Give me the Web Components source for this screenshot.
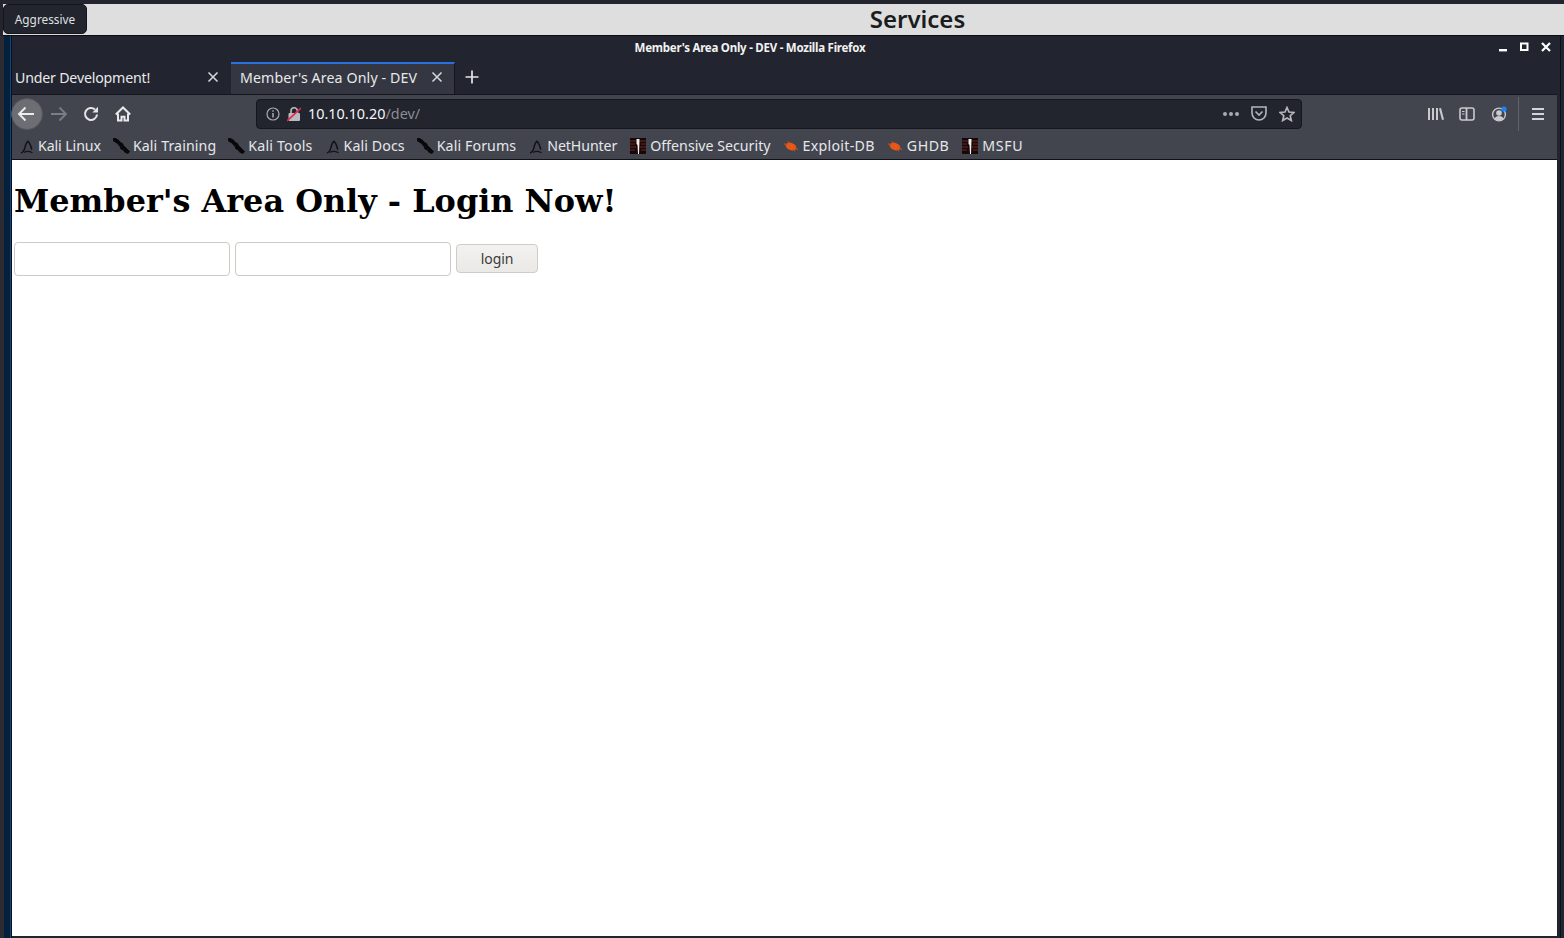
<!DOCTYPE html>
<html>
<head>
<meta charset="utf-8">
<title>Services</title>
<style>
  html, body { margin: 0; height: 100%; background: #23252e; overflow: hidden; }
</style>
</head>
<body>
<services-page>
  <services-header title-text="Services" slot="header"></services-header>
  <ff-window slot="window" window-title="Member's Area Only - DEV - Mozilla Firefox">
    <ff-tab slot="tabs" style="letter-spacing:-.2px">Under Development!</ff-tab>
    <ff-tab slot="tabs" active style="letter-spacing:.12px">Member's Area Only - DEV</ff-tab>
    <ff-bookmark slot="bookmarks" icon="dragon" style="letter-spacing:-.1px;margin-right:1px">Kali Linux</ff-bookmark>
    <ff-bookmark slot="bookmarks" icon="knife" style="letter-spacing:.1px;margin-right:1px">Kali Training</ff-bookmark>
    <ff-bookmark slot="bookmarks" icon="knife" style="letter-spacing:.2px;margin-right:2px">Kali Tools</ff-bookmark>
    <ff-bookmark slot="bookmarks" icon="dragon" style="letter-spacing:.1px;margin-right:1px">Kali Docs</ff-bookmark>
    <ff-bookmark slot="bookmarks" icon="knife" style="letter-spacing:.1px;margin-right:2px">Kali Forums</ff-bookmark>
    <ff-bookmark slot="bookmarks" icon="dragon" style="letter-spacing:-.1px;margin-right:2px">NetHunter</ff-bookmark>
    <ff-bookmark slot="bookmarks" icon="offsec" style="margin-right:1px">Offensive Security</ff-bookmark>
    <ff-bookmark slot="bookmarks" icon="bug" style="letter-spacing:.3px;margin-right:1px">Exploit-DB</ff-bookmark>
    <ff-bookmark slot="bookmarks" icon="bug" style="letter-spacing:.5px;margin-right:2px">GHDB</ff-bookmark>
    <ff-bookmark slot="bookmarks" icon="offsec" style="letter-spacing:.7px">MSFU</ff-bookmark>
    <login-page slot="content"></login-page>
  </ff-window>
</services-page>

<script>
const UI_FONT = `"Noto Sans", "Open Sans", sans-serif`;

const bookmarkIcons = {
  dragon: `<svg width="15" height="16" viewBox="0 0 15 16" fill="none" stroke="#121317" stroke-width="1.500">
      <path d="M1 15c2.300-.8 3.400-2.800 4-5.600C5.500 7 6.300 4.400 8.100 3.200c1.500 1.600 2.900 4.500 3.600 8.500"/>
      <path d="M4 14.500c2.200-1.400 5-1.500 8.500.2" stroke-width="1.200"/>
    </svg>`,
  knife: `<svg width="17" height="16" viewBox="0 0 17 16">
      <path d="M0 .5l3 .2 2.500 1.500 2 2.300 2 1 1 2 2.500 2.500 3.500 3.500-1.500 2-3.500-1.500-1-2-2.500-1-1-2.500L4 5 .5 3z" fill="#08080a" stroke="#08080a" stroke-width=".9"/>
    </svg>`,
  offsec: `<svg width="16" height="16" viewBox="0 0 16 16">
      <rect width="16" height="16" fill="#17090a"/>
      <path d="M0 3h6M0 6h5M0 9h6M0 12h5M10 3h6M11 6h5M10 9h6M11 12h5" stroke="#6b2a22" stroke-width="1"/>
      <path d="M6.500 1h3v2l-.5 13H8L7.500 7l-1-1z" fill="#f3eeea"/>
    </svg>`,
  bug: `<svg width="16" height="16" viewBox="0 0 16 16">
      <ellipse cx="8" cy="8.500" rx="5.500" ry="3.600" transform="rotate(22 8 8.500)" fill="#e8571a"/>
      <path d="M1 6l4 .5M5 3.500L7 6M12 13l-2-2.500M15 11.500l-3-1.500" stroke="#d64e18" stroke-width="1.100"/>
    </svg>`
};

class ServicesPage extends HTMLElement {
  constructor() {
    super();
    this.root = this.attachShadow({ mode: 'open' });
    this.root.innerHTML = `
      <style>
        :host { display: flex; flex-direction: column; height: 938px; padding-top: 4px; box-sizing: border-box; background: #23252e; }
        .body { flex: 1; display: flex; min-height: 0; }
        .left { width: 12px; background: linear-gradient(to right, #2b2b31 0 4px, #03203d 4px 10px, #0d4786 10px 11px, #0a0c12 11px 12px); }
        .right { width: 7px; background: linear-gradient(to right, #22252f 0 3px, #06121f 3px 4px, #22252f 4px 7px); }
        .main { flex: 1; min-width: 0; display: flex; }
      </style>
      <slot name="header"></slot>
      <div class="body">
        <div class="left"></div>
        <div class="main"><slot name="window"></slot></div>
        <div class="right"></div>
      </div>
    `;
  }
}

class ServicesHeader extends HTMLElement {
  constructor() {
    super();
    this.root = this.attachShadow({ mode: 'open' });
    this.root.innerHTML = `
      <style>
        :host { display: flex; height: 32px; box-sizing: border-box; margin-left: 3px; background: #dedede; border-bottom: 1px solid #0c0d10; font-family: ${UI_FONT}; }
        button {
          width: 84px; height: 30px; padding: 0; flex: none;
          background: #23252e; color: #dfe0e2; border: 1px solid #14151a; border-radius: 5px;
          font: 11.8px ${UI_FONT};
        }
        h2 { flex: 1; margin: 0; padding-left: 184px; text-align: center; font-size: 24px; line-height: 29px; font-weight: 600; color: #1b1c20; }
      </style>
      <button>Aggressive</button>
      <h2>${this.getAttribute('title-text')}</h2>
    `;
  }
}

class FfTab extends HTMLElement {
  constructor() {
    super();
    this.root = this.attachShadow({ mode: 'open' });
    this.root.innerHTML = `
      <style>
        :host { display: flex; align-items: center; box-sizing: border-box; width: 219px; height: 32px; padding: 0 12px 2px 3px; color: #e8e9eb; font: 14.2px ${UI_FONT}; }
        :host([active]) { width: 224px; padding-left: 9px; padding-right: 11px; padding-bottom: 4px; background: #343741; border-top: 2px solid #2a70e0; border-right: 1px solid #15161b; }
        .label { flex: 1; white-space: nowrap; overflow: hidden; }
        svg { flex: none; }
      </style>
      <span class="label"><slot></slot></span>
      <svg width="12" height="12" viewBox="0 0 12 12" stroke="#d4d5d8" stroke-width="1.600"><path d="M1.500 1.500l9 9M10.500 1.500l-9 9"/></svg>
    `;
  }
}

class FfBookmark extends HTMLElement {
  constructor() {
    super();
    this.root = this.attachShadow({ mode: 'open' });
    this.root.innerHTML = `
      <style>
        :host { display: inline-flex; align-items: center; gap: 3px; color: #e6e7ea; font: 14.2px ${UI_FONT}; white-space: nowrap; }
        :host([icon="offsec"]), :host([icon="bug"]) { gap: 4px; }
        svg { display: block; flex: none; }
      </style>
      ${bookmarkIcons[this.getAttribute('icon')]}
      <span><slot></slot></span>
    `;
  }
}

class FfWindow extends HTMLElement {
  constructor() {
    super();
    this.root = this.attachShadow({ mode: 'open' });
    this.root.innerHTML = `
      <style>
        :host { display: flex; flex-direction: column; flex: 1; min-width: 0; height: 100%; background: #22252f; font-family: ${UI_FONT}; }
        .titlebar { display: flex; align-items: center; height: 26px; flex: none; padding-bottom: 4px; box-sizing: border-box; }
        .title { flex: 1; text-align: center; color: #f2f2f2; font-size: 11.5px; font-weight: 700; letter-spacing: -.25px; }
        .controls { width: 69px; box-sizing: border-box; display: flex; gap: 12px; padding-left: 10px; align-items: center; }
        .tabs { display: flex; align-items: stretch; height: 32px; flex: none; }
        .newtab { width: 34px; display: flex; align-items: center; justify-content: center; padding-bottom: 3px; box-sizing: border-box; }
        .toolbar { position: relative; display: flex; align-items: center; height: 40px; padding-bottom: 2px; flex: none; background: #42454e; border-top: 1px solid #15161b; box-sizing: border-box; }
        .back { position: absolute; left: -1px; top: 3px; width: 32px; height: 32px; border-radius: 50%; background: #6c6e74; border: 1px solid #55575d; box-sizing: border-box; display: flex; align-items: center; justify-content: center; }
        .nav { display: flex; align-items: center; gap: 15px; margin-left: 38px; width: 206px; flex: none; }
        .urlbar { width: 1046px; height: 30px; box-sizing: border-box; flex: none; display: flex; align-items: center; background: #22242e; border: 1px solid #16171d; border-radius: 4px; padding: 0 6px 0 9px; font-size: 14.4px; }
        .host { color: #f6f6f7; margin-left: 7px; }
        .path { color: #8b8d93; }
        .spacer { flex: 1; }
        .url-actions { display: flex; align-items: center; gap: 12px; }
        .tools { display: flex; align-items: center; gap: 15px; margin-left: 125px; }
        .sep { width: 1px; height: 34px; background: #62646b; margin-left: -5px; }
        .bookmarks { display: flex; align-items: center; gap: 11px; height: 26px; flex: none; box-sizing: border-box; padding: 0 0 2px 8px; background: #42454e; border-bottom: 1px solid #111216; }
        .content { flex: 1; min-height: 0; background: #fff; margin-bottom: 2px; }
      </style>
      <div class="titlebar">
        <div class="title">${this.getAttribute('window-title')}</div>
        <div class="controls">
          <svg width="10" height="10" viewBox="0 0 10 10" fill="#fff"><rect x="1" y="7" width="8" height="2.400"/></svg>
          <svg width="9" height="10" viewBox="0 0 9 10" fill="none" stroke="#fff" stroke-width="2"><rect x="1" y="1.500" width="6.500" height="6.500"/></svg>
          <svg width="10" height="10" viewBox="0 0 10 10" stroke="#fff" stroke-width="2.200"><path d="M1 1l8 8M9 1l-8 8"/></svg>
        </div>
      </div>
      <div class="tabs">
        <slot name="tabs"></slot>
        <div class="newtab">
          <svg width="14" height="14" viewBox="0 0 14 14" stroke="#e4e5e7" stroke-width="1.700"><path d="M7 .5v13M.5 7h13"/></svg>
        </div>
      </div>
      <div class="toolbar">
        <div class="back">
          <svg width="18" height="16" viewBox="0 0 18 16" fill="none" stroke="#ececee" stroke-width="1.900" style="margin-right:2px"><path d="M17 8H2M8.500 1.500L2 8l6.500 6.500"/></svg>
        </div>
        <div class="nav">
          <svg width="18" height="16" viewBox="0 0 18 16" fill="none" stroke="#7b7d83" stroke-width="1.800"><path d="M1 8h15M9.500 1.500L16 8l-6.500 6.500"/></svg>
          <svg width="16" height="16" viewBox="0 0 16 16" fill="none" stroke="#e4e5e7" stroke-width="2.100"><path d="M14 8.500a6 6 0 1 1-2-5"/><path d="M15 .8v5.700H9.300z" fill="#e4e5e7" stroke="none"/></svg>
          <svg width="16" height="16" viewBox="0 0 16 16" fill="none" stroke="#e8e9eb" stroke-width="2" style="margin-left:1px"><path d="M.8 8.500L8 1.500l7.200 7"/><path d="M3 7.500v7h3.500v-3.800h3v3.800H13v-7"/></svg>
        </div>
        <div class="urlbar">
          <svg width="14" height="14" viewBox="0 0 14 14" fill="none" stroke="#a9abaf" stroke-width="1.200"><circle cx="7" cy="7" r="6"/><path d="M7 6v4.500" stroke-width="1.500"/><path d="M7 3.200v1.600" stroke-width="1.500"/></svg>
          <svg width="14" height="16" viewBox="0 0 14 16" style="margin-left:7px">
            <path d="M4 7V5a3.200 3.200 0 0 1 6.400 0v2" fill="none" stroke="#b9bbbf" stroke-width="1.600"/>
            <rect x="1.500" y="7" width="11.500" height="8" rx="1" fill="#b9bbbf"/>
            <path d="M0 15L14 2" stroke="#e22850" stroke-width="1.700"/>
          </svg>
          <span class="host">10.10.10.20<span class="path">/dev/</span></span>
          <span class="spacer"></span>
          <span class="url-actions">
            <svg width="18" height="6" viewBox="0 0 18 6" fill="#a9abaf" style="margin-right:-1px"><circle cx="3" cy="3" r="2"/><circle cx="9" cy="3" r="2"/><circle cx="15" cy="3" r="2"/></svg>
            <svg width="16" height="15" viewBox="0 0 16 15" fill="none" stroke="#b4b6ba" stroke-width="1.600"><path d="M1 1h14v6a7 7 0 0 1-14 0z"/><path d="M4.500 5.500L8 9l3.500-3.500"/></svg>
            <svg width="16" height="16" viewBox="0 0 16 16" fill="none" stroke="#b4b6ba" stroke-width="1.700"><path d="M8 1.500l2 4.500 4.900.500-3.700 3.200 1.100 4.800L8 12l-4.300 2.500 1.100-4.800L1.100 6.500 6 6z"/></svg>
          </span>
        </div>
        <div class="tools">
          <svg width="17" height="14" viewBox="0 0 17 14" fill="#c9cace"><rect x="1" y="1" width="2" height="12"/><rect x="5" y="1" width="2" height="12"/><rect x="9" y="1" width="2" height="12"/><path d="M12 1.400l2-.4 3 11.600-2 .4z"/></svg>
          <svg width="16" height="14" viewBox="0 0 16 14" fill="none" stroke="#c9cace" stroke-width="1.600"><rect x="1" y="1" width="14" height="12" rx="2"/><path d="M7.500 1v12" stroke-width="1.800"/><path d="M3 4.500h2.500M3 7h2.500" stroke-width="1"/></svg>
          <svg width="17" height="16" viewBox="0 0 17 16" style="margin-left:1px"><circle cx="8" cy="8.500" r="6.400" fill="none" stroke="#c9cace" stroke-width="1.400"/><circle cx="8" cy="7" r="2.800" fill="#c9cace"/><path d="M3.500 12.500c1-2 2.800-2.600 4.500-2.600s3.500.6 4.500 2.600c-1 1.300-2.700 2-4.500 2s-3.500-.7-4.500-2z" fill="#c9cace"/><circle cx="13" cy="3" r="2.600" fill="#1a84ff"/></svg>
          <div class="sep"></div>
          <svg width="12" height="12" viewBox="0 0 12 12" fill="#d4d5d8" style="margin-left:-2px"><rect width="12" height="2"/><rect y="5" width="12" height="2"/><rect y="10" width="12" height="2"/></svg>
        </div>
      </div>
      <div class="bookmarks"><slot name="bookmarks"></slot></div>
      <div class="content"><slot name="content"></slot></div>
    `;
  }
}

class LoginPage extends HTMLElement {
  constructor() {
    super();
    this.root = this.attachShadow({ mode: 'open' });
    this.root.innerHTML = `
      <style>
        :host { display: block; padding: 19px 2px 0; color: #000; }
        h1 { margin: 0 0 18px; font: 700 31.9px/45px "DejaVu Serif", serif; white-space: nowrap; }
        form { display: flex; align-items: center; gap: 5px; }
        input { width: 216px; height: 34px; box-sizing: border-box; padding: 0 6px; background: #fff; border: 1px solid #cdc9c4; border-radius: 4px; outline: none; }
        button { width: 82px; height: 29px; margin-bottom: 1px; padding: 0; background: linear-gradient(#f3f2f0, #ebe9e6); color: #3b3c3e; border: 1px solid #cfccc7; border-radius: 4px; font: 14px ${UI_FONT}; letter-spacing: -.1px; }
      </style>
      <h1>Member's Area Only - Login Now!</h1>
      <form>
        <input type="text">
        <input type="password">
        <button type="button">login</button>
      </form>
    `;
  }
}

customElements.define('services-page', ServicesPage);
customElements.define('services-header', ServicesHeader);
customElements.define('ff-tab', FfTab);
customElements.define('ff-bookmark', FfBookmark);
customElements.define('ff-window', FfWindow);
customElements.define('login-page', LoginPage);
</script>
</body>
</html>
